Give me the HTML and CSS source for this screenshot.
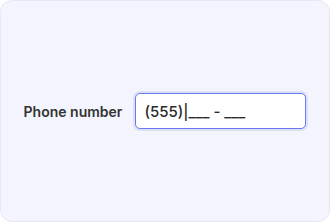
FILE: index.html
```html
<!DOCTYPE html>
<html lang="en">
<head>
  <meta charset="UTF-8" />
  <meta name="viewport" content="width=device-width, initial-scale=1.0" />
  <title>Phone input</title>
  <link rel="stylesheet" href="styles.css">
</head>
<body>
  <div class="card">
    <div class="field">
      <label for="phone">Phone number</label>
      <input type="text" id="phone" value="(555)|___ - ___" />
    </div>
  </div>
</body>
</html>
```

FILE: styles.css
```css
* {
  box-sizing: border-box;
}
body {
  margin: 0;
  background: #fff;
  font-family: 'Inter', 'Noto Sans', sans-serif;
}
.card {
  width: 330px;
  height: 222px;
  background: #f3f4fd;
  border: 1px solid #e7e8f4;
  border-radius: 12px;
  display: flex;
  align-items: center;
  justify-content: center;
}
.field {
  display: flex;
  align-items: center;
  gap: 13px;
}
.field label {
  font-size: 14px;
  font-weight: 600;
  color: #333;
}
.field input {
  width: 171px;
  height: 36px;
  padding: 0 8px;
  font-family: inherit;
  font-size: 15px;
  font-weight: 500;
  color: #2a2a2a;
  background: #fff;
  border: 1px solid #6b79ee;
  border-radius: 5px;
  box-shadow: 0 0 0 2px #dde0fb;
  outline: none;
  caret-color: transparent;
}
```
